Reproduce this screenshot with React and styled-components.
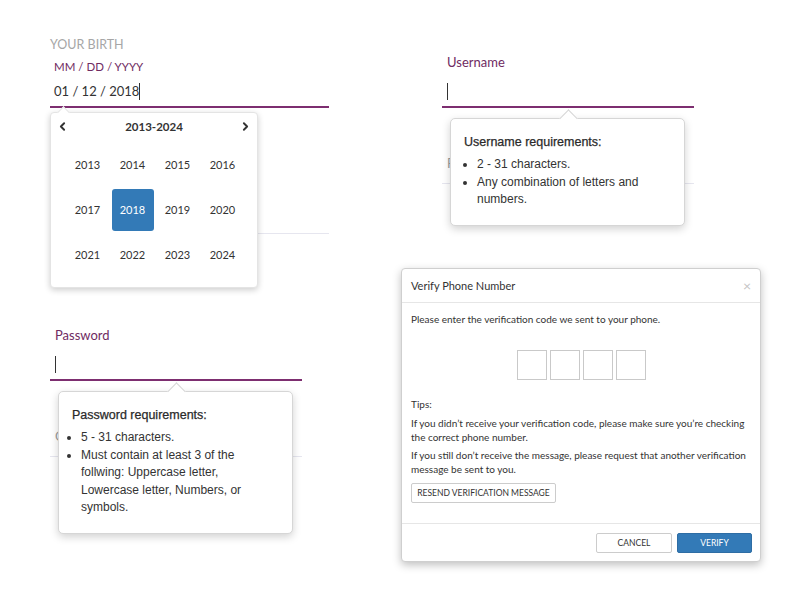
import React from "react";
import styled, { createGlobalStyle } from "styled-components";
import { ChevronLeft, ChevronRight } from "lucide-react";

const GlobalStyle = createGlobalStyle`
  body {
    margin: 0;
    background: #fff;
    font-family: Lato, "Open Sans", sans-serif;
    color: #333;
  }
`;

const Page = styled.div`
  display: grid;
  grid-template-columns: 401px 399px;
  width: 800px;
  height: 600px;
  overflow: hidden;
`;

const Column = styled.div`
  display: flex;
  flex-direction: column;
  align-items: flex-start;
  padding: ${(p) => p.$pad};
`;

const Group = styled.div`
  width: ${(p) => p.$w}px;
  margin-left: ${(p) => p.$ml || 0}px;
  margin-top: ${(p) => p.$mt || 0}px;
`;

const Field = styled.div`
  position: relative;
`;

const Caption = styled.div`
  font-size: 12.5px;
  line-height: 14px;
  color: #a6a6a6;
  text-transform: uppercase;
`;

const Label = styled.div`
  font-size: ${(p) => p.$size || 13}px;
  line-height: 16px;
  color: #6f2b62;
  padding-left: ${(p) => p.$indent || 5}px;
  margin-top: ${(p) => p.$mt || 0}px;
`;

const InputRow = styled.div`
  height: ${(p) => p.$h}px;
  display: flex;
  align-items: flex-end;
  padding: 0 0 0 ${(p) => p.$indent || 5}px;
  border-bottom: 2px solid #7d2e70;
`;

const Value = styled.div`
  display: flex;
  align-items: center;
  height: 18px;
  margin-bottom: 6px;
  font-size: 13px;
  color: #333;
`;

const Caret = styled.span`
  display: inline-block;
  width: 1px;
  height: 17px;
  background: #333;
`;

// the next field of the form, mostly hidden behind the popovers
const Ghost = styled.div`
  padding-top: ${(p) => p.$top}px;
`;

const GhostLabel = styled.div`
  height: 16px;
  font-size: 13px;
  line-height: 16px;
  color: #9b9b9b;
  padding-left: 5px;
`;

const GhostLine = styled.div`
  margin-top: 12px;
  height: 1px;
  background: #e6e6ef;
`;

/* calendar popover */

const Calendar = styled.div`
  position: absolute;
  top: calc(100% + 4px);
  left: 0;
  z-index: 2;
  width: 208px;
  box-sizing: border-box;
  padding-bottom: 10px;
  background: #fff;
  border: 1px solid #e4e4e4;
  border-radius: 4px;
  box-shadow: 0 2px 6px rgba(0, 0, 0, 0.2);

  &::before {
    content: "";
    position: absolute;
    top: -5px;
    left: 8px;
    width: 8px;
    height: 8px;
    background: #fff;
    border-left: 1px solid #e4e4e4;
    border-top: 1px solid #e4e4e4;
    transform: rotate(45deg);
  }
`;

const CalHeader = styled.div`
  position: relative;
  display: flex;
  align-items: center;
  justify-content: space-between;
  height: 26px;
  padding: 0 5px 3px;
  font-size: 11.5px;
  font-weight: 700;
  color: #333;
`;

const YearGrid = styled.div`
  display: grid;
  grid-template-columns: repeat(4, 45px);
  grid-auto-rows: 45px;
  margin-left: 14px;
`;

const Year = styled.div`
  display: flex;
  align-items: center;
  justify-content: center;
  margin: 1.5px;
  border-radius: 3px;
  font-size: 11px;
  color: ${(p) => (p.$active ? "#fff" : "#333")};
  background: ${(p) => (p.$active ? "#337ab7" : "transparent")};
`;

/* requirement tooltip */

const Tip = styled.div`
  position: absolute;
  top: calc(100% + 10px);
  left: 8px;
  z-index: 2;
  width: 235px;
  box-sizing: border-box;
  padding: 15px 26px 16px 13px;
  background: #fff;
  border: 1px solid #d6d6d6;
  border-radius: 5px;
  box-shadow: 0 3px 8px rgba(0, 0, 0, 0.18);
  font-family: "Liberation Sans", Arial, sans-serif;
  color: #333;

  &::before {
    content: "";
    position: absolute;
    top: -7px;
    left: 50%;
    width: 12px;
    height: 12px;
    margin-left: -6px;
    background: #fff;
    border-left: 1px solid #d6d6d6;
    border-top: 1px solid #d6d6d6;
    transform: rotate(45deg);
  }
`;

const TipTitle = styled.div`
  font-size: 12.5px;
  line-height: 17px;
  margin-bottom: 5px;
  color: #2a2a2a;
  -webkit-text-stroke: 0.25px #2a2a2a;
`;

const TipList = styled.ul`
  margin: 0;
  padding-left: ${(p) => p.$indent}px;
  font-size: 12px;
  line-height: 17.5px;
`;

/* verify modal */

const Modal = styled.div`
  width: 360px;
  box-sizing: border-box;
  margin-top: 84px;
  background: #fff;
  border: 1px solid #cfcfcf;
  border-radius: 4px;
  box-shadow: 0 3px 9px rgba(0, 0, 0, 0.25);
  font-size: 10px;
  color: #333;
`;

const ModalHeader = styled.div`
  display: flex;
  align-items: center;
  justify-content: space-between;
  height: 33px;
  padding: 0 9px;
  border-bottom: 1px solid #e6e6e6;
  font-size: 11px;
`;

const Close = styled.span`
  font-size: 14px;
  color: #c4c4c4;
`;

const ModalBody = styled.div`
  padding: 10px 9px 20px;
`;

const Text = styled.p`
  margin: ${(p) => p.$mt || 0}px 0 0;
  line-height: 13.5px;
`;

const CodeRow = styled.div`
  display: flex;
  justify-content: center;
  gap: 3px;
  margin-top: 23px;
`;

const CodeBox = styled.div`
  width: 30px;
  height: 30px;
  box-sizing: border-box;
  border: 1px solid #c9c9c9;
`;

const Button = styled.button`
  display: flex;
  align-items: center;
  justify-content: center;
  width: ${(p) => p.$w}px;
  height: 20px;
  margin-top: ${(p) => p.$mt || 0}px;
  padding: 0;
  box-sizing: border-box;
  border: 1px solid ${(p) => (p.$primary ? "#2e6da4" : "#cccccc")};
  border-radius: 2px;
  background: ${(p) => (p.$primary ? "#337ab7" : "#fff")};
  color: ${(p) => (p.$primary ? "#fff" : "#333")};
  font-family: Lato, sans-serif;
  font-size: 8.5px;
  text-transform: uppercase;
`;

const ModalFooter = styled.div`
  display: flex;
  justify-content: flex-end;
  gap: 5px;
  padding: 9px 8px 8px;
  border-top: 1px solid #e6e6e6;
`;

const years = [2013, 2014, 2015, 2016, 2017, 2018, 2019, 2020, 2021, 2022, 2023, 2024];

function App() {
  return (
    <Page>
      <GlobalStyle />
      <Column $pad="38px 0 0 50px">
        <Group $w={279}>
          <Field>
            <Caption>Your Birth</Caption>
            <Label $indent={4} $size={11.5} $mt={7}>
              MM / DD / YYYY
            </Label>
            <InputRow $h={31} $indent={4}>
              <Value>
                01 / 12 / 2018
                <Caret />
              </Value>
            </InputRow>
            <Calendar>
              <CalHeader>
                <ChevronLeft size={13} strokeWidth={3.5} />
                <span>2013-2024</span>
                <ChevronRight size={13} strokeWidth={3.5} />
              </CalHeader>
              <YearGrid>
                {years.map((y) => (
                  <Year key={y} $active={y === 2018}>
                    {y}
                  </Year>
                ))}
              </YearGrid>
            </Calendar>
          </Field>
          <Ghost $top={97}>
            <GhostLabel />
            <GhostLine />
          </Ghost>
        </Group>

        <Group $w={252} $mt={93}>
          <Field>
            <Label>Password</Label>
            <InputRow $h={36}>
              <Value>
                <Caret />
              </Value>
            </InputRow>
            <Tip>
              <TipTitle>Password requirements:</TipTitle>
              <TipList $indent={9}>
                <li>5 - 31 characters.</li>
                <li>
                  Must contain at least 3 of the follwing: Uppercase letter,
                  Lowercase letter, Numbers, or symbols.
                </li>
              </TipList>
            </Tip>
          </Field>
          <Ghost $top={47}>
            <GhostLabel>Confirm Password</GhostLabel>
            <GhostLine />
          </Ghost>
        </Group>
      </Column>

      <Column $pad="54px 0 0 0">
        <Group $w={252} $ml={41}>
          <Field>
            <Label>Username</Label>
            <InputRow $h={36}>
              <Value>
                <Caret />
              </Value>
            </InputRow>
            <Tip>
              <TipTitle>Username requirements:</TipTitle>
              <TipList $indent={13}>
                <li>2 - 31 characters.</li>
                <li>Any combination of letters and numbers.</li>
              </TipList>
            </Tip>
          </Field>
          <Ghost $top={47}>
            <GhostLabel>Password</GhostLabel>
            <GhostLine />
          </Ghost>
        </Group>

        <Modal>
          <ModalHeader>
            <span>Verify Phone Number</span>
            <Close>×</Close>
          </ModalHeader>
          <ModalBody>
            <Text>Please enter the verification code we sent to your phone.</Text>
            <CodeRow>
              <CodeBox />
              <CodeBox />
              <CodeBox />
              <CodeBox />
            </CodeRow>
            <Text $mt={18}>Tips:</Text>
            <Text $mt={6}>
              If you didn’t receive your verification code, please make sure you’re
              checking the correct phone number.
            </Text>
            <Text $mt={5}>
              If you still don’t receive the message, please request that another
              verification message be sent to you.
            </Text>
            <Button $w={145} $mt={7}>
              Resend Verification Message
            </Button>
          </ModalBody>
          <ModalFooter>
            <Button $w={76}>Cancel</Button>
            <Button $w={75} $primary>
              Verify
            </Button>
          </ModalFooter>
        </Modal>
      </Column>
    </Page>
  );
}

export default App;
